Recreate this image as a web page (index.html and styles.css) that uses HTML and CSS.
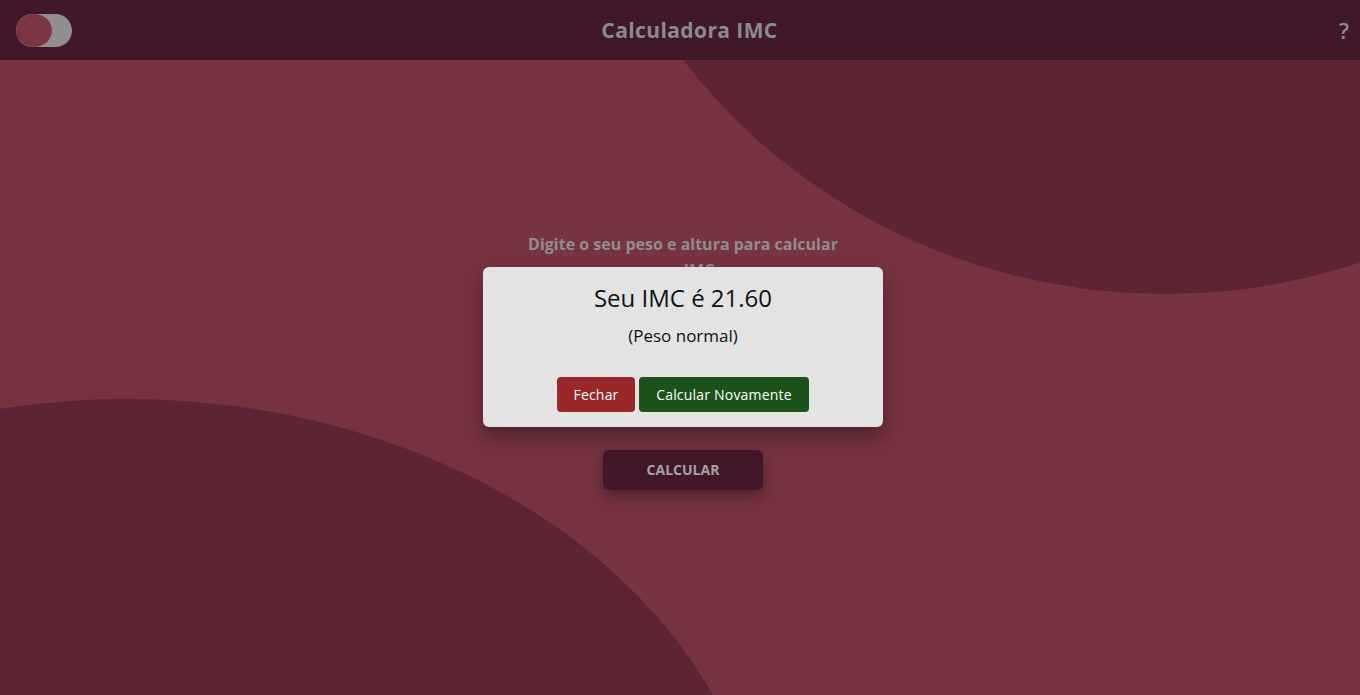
FILE: index.html
```html
<!DOCTYPE html>
<html lang="pt-BR">
<head>
<meta charset="utf-8">
<title>Calculadora IMC</title>
<link rel="stylesheet" href="styles.css">
</head>
<body>
<header class="topbar">
  <div class="theme-toggle"><span class="knob"></span></div>
  <h1 class="title">Calculadora IMC</h1>
  <span class="help">?</span>
</header>
<main class="stage">
  <svg class="backdrop" viewBox="0 0 1360 695" preserveAspectRatio="none" aria-hidden="true">
    <ellipse class="blob" cx="1165" cy="-285" rx="600" ry="579"/>
    <ellipse class="blob" cx="127" cy="894" rx="640" ry="495"/>
  </svg>
  <section class="calc">
    <p class="prompt">Digite o seu peso e altura para calcular seu IMC</p>
    <div class="fields">
      <input class="field" type="text" placeholder="Peso (kg)">
      <input class="field" type="text" placeholder="Altura (m)">
    </div>
    <button class="calc-btn">CALCULAR</button>
  </section>
</main>
<div class="modal-layer">
  <div class="modal">
    <h2 class="modal-title">Seu IMC é 21.60</h2>
    <p class="modal-sub">(Peso normal)</p>
    <div class="modal-actions">
      <button class="btn btn-close">Fechar</button>
      <button class="btn btn-again">Calcular Novamente</button>
    </div>
  </div>
</div>
</body>
</html>
```

FILE: styles.css
```css
* { box-sizing: border-box; }
html, body { margin: 0; padding: 0; }
body {
  width: 1360px;
  height: 695px;
  overflow: hidden;
  background: #773340;
  font-family: "Open Sans", "Liberation Sans", sans-serif;
  position: relative;
}
.topbar {
  position: relative;
  z-index: 2;
  height: 60px;
  background: #41172a;
  display: grid;
  grid-template-columns: 1fr auto 1fr;
  align-items: center;
  padding: 0 11px 0 16px;
}
.theme-toggle {
  width: 56px;
  height: 33px;
  border-radius: 17px;
  background: #8f8f8f;
  display: flex;
  align-items: center;
}
.knob {
  width: 36px;
  height: 33px;
  border-radius: 50%;
  background: #7a3442;
}
.title {
  margin: 0;
  padding-left: 14px;
  font-size: 21px;
  font-weight: 700;
  color: #8b8b8b;
  letter-spacing: 0.4px;
}
.help {
  justify-self: end;
  font-size: 22px;
  font-weight: 600;
  color: #8b8b8b;
}
.stage {
  position: relative;
  height: 635px;
}
.backdrop {
  position: absolute;
  top: -60px;
  left: 0;
  width: 1360px;
  height: 695px;
  z-index: 0;
}
.blob { fill: #5d2534; }
.calc {
  position: relative;
  z-index: 1;
  display: flex;
  flex-direction: column;
  align-items: center;
  padding-top: 171px;
  padding-left: 6px;
}
.prompt {
  margin: 0;
  width: 340px;
  text-align: center;
  font-size: 16px;
  line-height: 26px;
  font-weight: 700;
  color: #8e8e8e;
}
.fields {
  display: flex;
  flex-direction: column;
  gap: 15px;
  margin: 20px 0 36px;
}
.field {
  width: 300px;
  height: 48px;
  border: none;
  border-radius: 6px;
  background: #5d2534;
}
.calc-btn {
  width: 160px;
  height: 40px;
  border: none;
  border-radius: 6px;
  background: #42172a;
  color: #a2a2a2;
  font-family: inherit;
  font-size: 14px;
  font-weight: 700;
  line-height: 38px;
  box-shadow: 0 6px 14px rgba(0, 0, 0, 0.35);
}
.modal-layer {
  position: absolute;
  inset: 0;
  z-index: 5;
}
.modal {
  position: absolute;
  left: 483px;
  top: 267px;
  width: 400px;
  height: 160px;
  background: #e3e3e3;
  border-radius: 6px;
  box-shadow: 0 10px 18px rgba(0, 0, 0, 0.35);
  display: flex;
  flex-direction: column;
  align-items: center;
  padding-top: 15px;
}
.modal-title {
  margin: 0;
  font-size: 24px;
  line-height: 32px;
  font-weight: 400;
  color: #111;
}
.modal-sub {
  margin: 10px 0 0;
  font-size: 17px;
  line-height: 24px;
  color: #111;
}
.modal-actions {
  margin-top: 29px;
  display: flex;
  gap: 4px;
}
.btn {
  height: 35px;
  border: none;
  border-radius: 4px;
  padding: 0 12px;
  font-family: inherit;
  font-size: 14px;
  font-weight: 500;
  letter-spacing: 0.2px;
  color: #fff;
}
.btn-close { background: #9b2828; width: 78px; }
.btn-again { background: #1b531b; width: 170px; }
```
